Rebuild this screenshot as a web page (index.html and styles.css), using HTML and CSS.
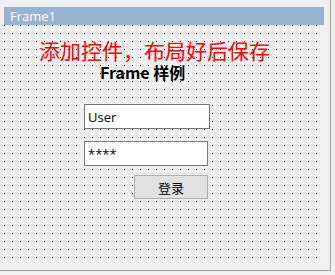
FILE: index.html
```html
<!DOCTYPE html>
<html>

  <head>
    <title>Frame1</title>
    <link rel="stylesheet" href="styles.css">
  </head>

  <body>
    <div class="window">
      <div class="title-bar">Frame1</div>

      <div class="client">
        <p class="hint">添加控件，布局好后保存</p>
        <p class="caption">Frame 样例</p>

        <input class="text-box user-box" type="text" value="User">
        <input class="text-box pass-box" type="text" value="****">

        <button class="login-button">登录</button>
      </div>
    </div>
  </body>

</html>
```

FILE: styles.css
```css
body{
  margin: 0;
  background-color: #f0f0f0;
  font-family: "Noto Sans CJK SC", sans-serif;
}

.window{
  width: 326px;
  height: 263px;
  padding: 7px 0 0 4px;
  border-right: 1px solid #a0a0a0;
  border-bottom: 1px solid #a0a0a0;
}

.title-bar{
  width: 314px;
  height: 18px;
  padding-left: 6px;
  background-color: #99b4d1;
  color: white;
  font-family: "Open Sans", sans-serif;
  font-size: 13px;
  line-height: 18px;
}

/* designer grid: one black dot every 8px */
.client{
  width: 320px;
  height: 240px;
  display: flex;
  flex-direction: column;
  align-items: flex-start;
  background-image: conic-gradient(at 1px 1px, transparent 75%, #000 0);
  background-size: 8px 8px;
}

.hint{
  margin: 14px 0 0 35px;
  color: #ff0000;
  font-size: 21px;
  line-height: 23px;
}

.caption{
  margin: 0 0 0 96px;
  font-size: 16px;
  font-weight: bold;
  line-height: 20px;
}

.text-box{
  box-sizing: border-box;
  height: 25px;
  margin: 0;
  padding: 0 3px;
  border: 1px solid #7a7a7a;
  background-color: white;
  font-family: "Open Sans", sans-serif;
  font-size: 13px;
  color: black;
}

.user-box{
  width: 126px;
  margin: 22px 0 0 80px;
}

.pass-box{
  width: 124px;
  margin: 12px 0 0 80px;
}

.login-button{
  box-sizing: border-box;
  width: 74px;
  height: 24px;
  margin: 9px 0 0 130px;
  padding: 0;
  border: 1px solid #adadad;
  background-color: #e1e1e1;
  font-family: "Noto Sans CJK SC", sans-serif;
  font-size: 13px;
  color: black;
}
```
